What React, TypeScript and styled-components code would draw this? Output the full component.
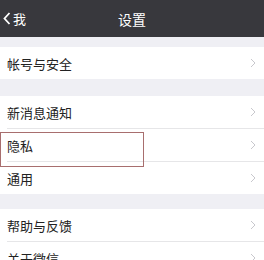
import React from "react";
import styled, { createGlobalStyle } from "styled-components";

const Global = createGlobalStyle`
  html, body {
    margin: 0;
    padding: 0;
    background: #efeff4;
    overflow: hidden;
  }
  body {
    font-family: "Noto Sans CJK SC", "Noto Sans", sans-serif;
  }
`;

const groups = [
  { gap: 10, items: ["帐号与安全"] },
  { gap: 17, items: ["新消息通知", "隐私", "通用"] },
  { gap: 15, items: ["帮助与反馈", "关于微信"] },
];

export default function App() {
  return (
    <Page>
      <Global />
      <Header>
        <Back>
          <svg width="8" height="13" viewBox="0 0 8 13">
            <path d="M6.5 1 L1.5 6.5 L6.5 12" fill="none" stroke="#fff" strokeWidth="1.8" />
          </svg>
          <span>我</span>
        </Back>
        <Title>设置</Title>
      </Header>
      {groups.map((g, gi) => (
        <Group key={gi} $gap={g.gap}>
          {g.items.map((item, i) => (
            <Row key={item} $last={i === g.items.length - 1}>
              <Label>{item}</Label>
              <svg width="6" height="10" viewBox="0 0 6 10">
                <path d="M1 1 L5 5 L1 9" fill="none" stroke="#c8c8cd" strokeWidth="1" />
              </svg>
              {item === "隐私" && <Highlight />}
            </Row>
          ))}
        </Group>
      ))}
    </Page>
  );
}

const Page = styled.div`
  width: 264px;
  height: 260px;
  background: #efeff4;
`;

const Header = styled.div`
  height: 37px;
  background: #38383d;
  position: relative;
  display: flex;
  align-items: center;
  justify-content: center;
`;

const Back = styled.div`
  position: absolute;
  left: 3px;
  top: 0;
  bottom: 0;
  display: flex;
  align-items: center;
  gap: 2px;
  color: #fff;
  font-size: 13px;
`;

const Title = styled.div`
  color: #fff;
  font-size: 14px;
`;

const Group = styled.div<{ $gap: number }>`
  margin-top: ${(p) => p.$gap}px;
  background: #fff;
`;

const Row = styled.div<{ $last: boolean }>`
  position: relative;
  height: 32px;
  display: flex;
  align-items: center;
  justify-content: space-between;
  padding: 0 8px 0 7px;
  box-sizing: border-box;
  ${(p) =>
    !p.$last &&
    `&::after {
      content: "";
      position: absolute;
      left: 7px;
      right: 0;
      bottom: -1px;
      height: 1px;
      background: #e6e6e8;
      z-index: 1;
    }
    margin-bottom: 1px;`}
`;

const Label = styled.span`
  font-size: 13px;
  color: #222;
`;

const Highlight = styled.div`
  position: absolute;
  left: 0;
  top: 3px;
  width: 144px;
  height: 35px;
  box-sizing: border-box;
  border: 1px solid #a86e6e;
  z-index: 2;
`;
